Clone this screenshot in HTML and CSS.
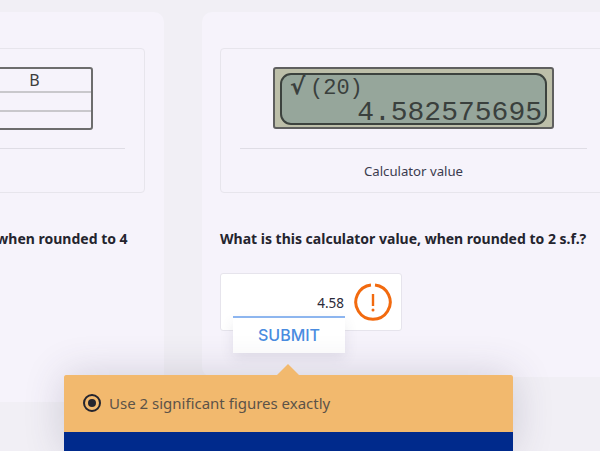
FILE: index.html
```html
<!DOCTYPE html>
<html lang="en">
<head>
<meta charset="utf-8">
<title>Rounding practice</title>
<link rel="stylesheet" href="styles.css">
</head>
<body>
<main class="stage">
  <section class="card card-left">
    <div class="figure">
      <div class="figure-media">
        <div class="data-table">
          <div class="table-row table-head"><span class="table-cell">B</span></div>
          <div class="table-row"></div>
          <div class="table-row"></div>
        </div>
      </div>
      <p class="caption">Table value</p>
    </div>
    <p class="question question-wrap">What is this value from the table, when rounded to 4 s.f.?</p>
  </section>
  <section class="card card-right">
    <div class="figure">
      <div class="figure-media">
        <div class="calculator">
          <div class="calc-screen">
            <div class="calc-input"><span class="calc-root">√</span>(20)</div>
            <div class="calc-output">4.582575695</div>
          </div>
        </div>
      </div>
      <p class="caption">Calculator value</p>
    </div>
    <p class="question">What is this calculator value, when rounded to 2 s.f.?</p>
    <div class="answer">
      <div class="answer-field">4.58</div>
      <svg class="warn" width="38" height="38" viewBox="0 0 38 38" aria-hidden="true">
        <path class="warn-ring" d="M21 2A17.2 17.2 0 1 1 17 2"/>
        <path class="warn-bar" d="M19 11V23"/>
        <circle class="warn-dot" cx="19" cy="27" r="1.5"/>
      </svg>
      <button class="submit" type="button">SUBMIT</button>
    </div>
  </section>
  <aside class="hint">
    <span class="hint-arrow"></span>
    <div class="hint-body">
      <span class="radio"><span class="radio-dot"></span></span>
      <span class="hint-text">Use 2 significant figures exactly</span>
    </div>
    <div class="hint-bar"></div>
  </aside>
</main>
</body>
</html>
```
FILE: styles.css
```css
* { box-sizing: border-box; }
html, body { margin: 0; height: 100%; }
body { background: #f1eff5; font-family: "Noto Sans", "Open Sans", sans-serif; color: #2c2c3a; overflow: hidden; }
.stage { position: relative; display: flex; align-items: flex-start; gap: 38px; width: 600px; height: 451px; padding-top: 12px; overflow: hidden; }
.card { flex: 0 0 423px; background: #f6f3fb; border-radius: 10px; padding: 36px 18px 0; }
.card-left { height: 390px; margin-left: -259px; padding-right: 19px; }
.card-right { height: 365px; }
.figure { height: 145px; border: 1px solid #e7e5ec; border-radius: 4px; padding: 18px 19px 0; text-align: center; }
.figure-media { height: 82px; border-bottom: 1px solid #dfdde5; display: flex; justify-content: center; align-items: flex-start; }
.caption { margin: 13px 0 0; font-size: 13.2px; line-height: 18px; color: #3b3b4e; }
.question { margin: 36px 0 0; font-size: 14px; line-height: 20px; font-weight: 700; color: #24242e; white-space: nowrap; }
.question-wrap { white-space: normal; padding-left: 2px; }
.data-table { width: 281px; height: 63px; border: 2px solid #6d6d6d; border-radius: 3px; display: flex; flex-direction: column; }
.table-row { flex: 1; border-top: 2px solid #c9c8cc; display: flex; justify-content: flex-end; }
.table-head { flex: 0 0 19px; border-top: 0; }
.table-cell { width: 112px; font-size: 16px; line-height: 22px; color: #3d3d3d; text-align: center; }
.calculator { width: 281px; height: 62px; background: #bdbfa9; border: 2px solid #5f5f5f; border-radius: 3px; padding: 4px 5px; }
.calc-screen { height: 52px; background: #96a69b; border: 2px solid #3c423e; border-radius: 11px; font-family: "Liberation Mono", monospace; color: #3a403d; padding: 0 3px 0 8px; white-space: nowrap; }
.calc-input { font-size: 22px; line-height: 24px; height: 24px; padding-top: 2px; text-align: left; display: flex; }
.calc-root { font-family: "DejaVu Sans", sans-serif; font-weight: 700; font-size: 23px; width: 20px; line-height: 19px; }
.calc-output { font-size: 28px; line-height: 27px; text-align: right; }
.answer { position: relative; margin-top: 24px; width: 182px; height: 58px; background: #fff; border: 1px solid #e6e4ec; border-radius: 3px; padding: 0 0 0 12px; display: flex; align-items: flex-start; gap: 9px; }
.answer-field { width: 112px; height: 44px; border-bottom: 2px solid #8fb8f2; padding: 19px 1px 0 0; font-size: 13.5px; line-height: 20px; text-align: right; color: #2a2a38; }
.warn { margin-top: 9px; flex: none; }
.warn-ring { fill: none; stroke: #f26a0f; stroke-width: 3; }
.warn-bar { fill: none; stroke: #f26a0f; stroke-width: 2.4; }
.warn-dot { fill: #f26a0f; }
.submit { position: absolute; left: 12px; top: 44px; width: 112px; height: 35px; background: #fff; border: 0; padding: 0 0 2px; font: 500 16px/28px Inter, "Noto Sans", sans-serif; color: #4a8ce0; box-shadow: 0 5px 14px rgba(60, 60, 90, .10); }
.hint { position: absolute; left: 64px; top: 375px; width: 449px; height: 76px; box-shadow: 0 0 40px rgba(60, 55, 90, .2); }
.hint-arrow { position: absolute; left: 213px; top: -11px; width: 22px; height: 11px; background: #f2b96e; clip-path: polygon(50% 0, 100% 100%, 0 100%); }
.hint-body { height: 57px; background: #f2b96e; border-radius: 2px 2px 0 0; display: flex; align-items: center; gap: 8px; padding: 0 19px 2px; }
.radio { width: 18px; height: 18px; border: 2px solid #24242e; border-radius: 50%; display: flex; align-items: center; justify-content: center; }
.radio-dot { width: 8px; height: 8px; border-radius: 50%; background: #24242e; }
.hint-text { font-size: 15px; line-height: 20px; color: #5c5348; }
.hint-bar { height: 19px; background: #002a8c; }
```
